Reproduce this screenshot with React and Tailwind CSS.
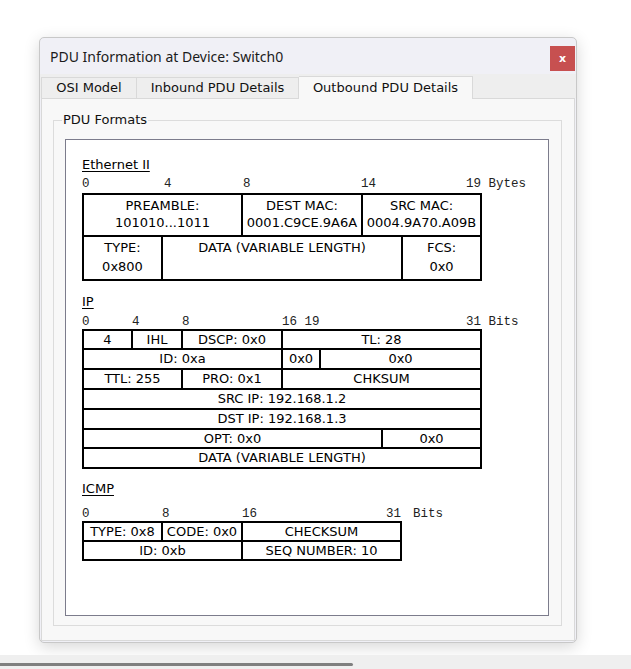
export default function App() {
  return (
    <div className="w-[631px] h-[669px] bg-white flex flex-col overflow-hidden">
      <div className="h-[655px] pl-[39px] pt-[37px]">
        <PduWindow />
      </div>
      {/* scroll bar at the foot of the page */}
      <div className="h-[14px] bg-[#efefef] pt-[8px]">
        <div className="w-[353px] h-[3px] bg-[#7f7f7f] rounded-r-[2px]" />
      </div>
    </div>
  );
}

function PduWindow() {
  return (
    <div className="w-[538px] h-[606px] rounded-[5px] border border-[#c8c8c8] bg-[#f0f0f6] shadow-[0_4px_16px_rgba(0,0,0,0.16)] flex flex-col">
      {/* Title bar */}
      <div className="h-[36px] flex items-start justify-between pl-[10px] pr-[1px]">
        <span className="mt-[9px] font-['Noto_Sans',sans-serif] text-[14px] leading-[20px] text-[#1b1b1b]">
          PDU Information at Device: Switch0
        </span>
        <button className="mt-[8px] w-[25px] h-[25px] bg-[#c75050] text-white flex items-center justify-center font-['DejaVu_Sans',sans-serif] font-bold text-[11px] leading-none">
          x
        </button>
      </div>

      {/* Tabs */}
      <div className="h-[24px] bg-[#eeeeee] flex items-end pl-[1px] relative z-10 font-['DejaVu_Sans',sans-serif] text-[13px] text-[#111]">
        <div className="w-[96px] h-[21px] border-t border-l border-r border-[#d9d9d9] flex items-center justify-center">
          OSI Model
        </div>
        <div className="w-[162px] h-[21px] border-t border-r border-[#d9d9d9] flex items-center justify-center">
          Inbound PDU Details
        </div>
        <div className="w-[174px] h-[23px] -mb-[1px] border-t border-r border-[#d9d9d9] bg-[#f8f8f8] flex items-center justify-center pb-[1px]">
          Outbound PDU Details
        </div>
      </div>

      {/* Content */}
      <div className="flex-1 mx-[1px] mb-[1px] border border-[#d9d9d9] bg-[#f8f8f8]">
        <fieldset className="mt-[13px] ml-[11px] mr-[12px] h-[514px] border border-[#dcdcdc] font-['DejaVu_Sans',sans-serif] text-[13px] text-black">
          <legend className="ml-[8px] px-[1px] leading-[16px] text-[#111]">PDU Formats</legend>
          <div className="mt-[11px] ml-[11px] w-[484px] h-[477px] bg-white border border-[#7c7c8c] pl-[16px] pt-[17px]">
            <EthernetSection />
            <IpSection />
            <IcmpSection />
          </div>
        </fieldset>
      </div>
    </div>
  );
}

function Ruler({ marks }) {
  return (
    <div className="flex h-[14px] font-['Liberation_Mono',monospace] text-[12.5px] leading-[14px] text-[#222] whitespace-pre">
      {marks.map(([w, label], i) => (
        <span key={i} className="shrink-0" style={{ width: w }}>
          {label}
        </span>
      ))}
    </div>
  );
}

function EthernetSection() {
  return (
    <div>
      <div className="leading-[16px] underline underline-offset-[2px]">Ethernet II</div>
      <div className="mt-[4px]">
        <Ruler marks={[[82, "0"], [79, "4"], [118, "8"], [105, "14"], [120, "19 Bytes"]]} />
      </div>
      <div className="mt-[2px] w-[400px] bg-black p-[2px] flex flex-col gap-[2px]">
        <div className="flex gap-[2px] h-[40px]">
          <div className="w-[157px] bg-white flex flex-col items-center pt-[2px] leading-[17px]">
            <span>PREAMBLE:</span>
            <span>101010...1011</span>
          </div>
          <div className="w-[118px] bg-white flex flex-col items-center pt-[2px] leading-[17px]">
            <span>DEST MAC:</span>
            <span>0001.C9CE.9A6A</span>
          </div>
          <div className="flex-1 bg-white flex flex-col items-center pt-[2px] leading-[17px]">
            <span>SRC MAC:</span>
            <span>0004.9A70.A09B</span>
          </div>
        </div>
        <div className="flex gap-[2px] h-[42px]">
          <div className="w-[77px] bg-white flex flex-col items-center pt-[1px] leading-[19px]">
            <span>TYPE:</span>
            <span>0x800</span>
          </div>
          <div className="w-[238px] bg-white flex flex-col items-center pt-[1px] leading-[19px]">
            <span>DATA (VARIABLE LENGTH)</span>
          </div>
          <div className="flex-1 bg-white flex flex-col items-center pt-[1px] leading-[19px]">
            <span>FCS:</span>
            <span>0x0</span>
          </div>
        </div>
      </div>
    </div>
  );
}

function IpSection() {
  const cell = "bg-white flex items-center justify-center leading-[16px]";
  return (
    <div className="mt-[13px]">
      <div className="leading-[16px] underline underline-offset-[2px]">IP</div>
      <div className="mt-[5px]">
        <Ruler marks={[[50, "0"], [50, "4"], [100, "8"], [184, "16 19"], [120, "31 Bits"]]} />
      </div>
      <div className="w-[400px] bg-black p-[2px] flex flex-col gap-[2px]">
        <div className="flex gap-[2px] h-[17px]">
          <div className={`w-[47px] ${cell}`}>4</div>
          <div className={`w-[48px] ${cell}`}>IHL</div>
          <div className={`w-[98px] ${cell}`}>DSCP: 0x0</div>
          <div className={`flex-1 ${cell}`}>TL: 28</div>
        </div>
        <div className="flex gap-[2px] h-[18px]">
          <div className={`w-[197px] ${cell}`}>ID: 0xa</div>
          <div className={`w-[36px] ${cell}`}>0x0</div>
          <div className={`flex-1 ${cell}`}>0x0</div>
        </div>
        <div className="flex gap-[2px] h-[18px]">
          <div className={`w-[97px] ${cell}`}>TTL: 255</div>
          <div className={`w-[98px] ${cell}`}>PRO: 0x1</div>
          <div className={`flex-1 ${cell}`}>CHKSUM</div>
        </div>
        <div className="flex gap-[2px] h-[18px]">
          <div className={`flex-1 ${cell}`}>SRC IP: 192.168.1.2</div>
        </div>
        <div className="flex gap-[2px] h-[18px]">
          <div className={`flex-1 ${cell}`}>DST IP: 192.168.1.3</div>
        </div>
        <div className="flex gap-[2px] h-[17px]">
          <div className={`w-[297px] ${cell}`}>OPT: 0x0</div>
          <div className={`flex-1 ${cell}`}>0x0</div>
        </div>
        <div className="flex gap-[2px] h-[18px]">
          <div className={`flex-1 ${cell}`}>DATA (VARIABLE LENGTH)</div>
        </div>
      </div>
    </div>
  );
}

function IcmpSection() {
  const cell = "bg-white flex items-center justify-center leading-[16px]";
  return (
    <div className="mt-[12px]">
      <div className="leading-[16px] underline underline-offset-[2px]">ICMP</div>
      <div className="mt-[10px]">
        <Ruler marks={[[80, "0"], [80, "8"], [144, "16"], [27, "31"], [40, "Bits"]]} />
      </div>
      <div className="w-[320px] bg-black p-[2px] flex flex-col gap-[2px]">
        <div className="flex gap-[2px] h-[17px]">
          <div className={`w-[77px] ${cell}`}>TYPE: 0x8</div>
          <div className={`w-[78px] ${cell}`}>CODE: 0x0</div>
          <div className={`flex-1 ${cell}`}>CHECKSUM</div>
        </div>
        <div className="flex gap-[2px] h-[17px]">
          <div className={`w-[157px] ${cell}`}>ID: 0xb</div>
          <div className={`flex-1 ${cell}`}>SEQ NUMBER: 10</div>
        </div>
      </div>
    </div>
  );
}
